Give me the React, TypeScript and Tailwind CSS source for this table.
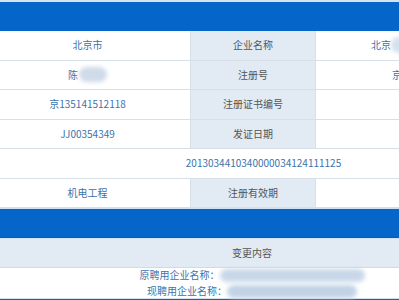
import React from "react";

const font = { fontFamily: '"Noto Sans CJK SC", "Liberation Sans", sans-serif' };

function Blur({ className }: { className: string }) {
  return <span className={"inline-block rounded-full blur-[2px] " + className} />;
}

function Row({
  left,
  label,
  right,
}: {
  left: React.ReactNode;
  label: string;
  right: React.ReactNode;
}) {
  return (
    <div className="grid grid-cols-[205px_126px_226px] h-[29.5px] border-b border-[#d7e0e9]">
      <div className="flex items-center justify-center text-[#3c72ab]">{left}</div>
      <div className="flex items-center justify-center bg-[#e2ebf4] border-l border-r border-[#d7e0e9] text-[#555]">
        {label}
      </div>
      <div className="flex items-center justify-center text-[#3c72ab]">{right}</div>
    </div>
  );
}

export default function App() {
  return (
    <div className="w-[399px] h-[300px] overflow-hidden bg-white text-[10px] leading-none" style={font}>
      <div className="-ml-[15px] w-[557px]">
        <div className="h-[31px] border-t-2 border-[#d6e2ee] bg-[#0565c8]" />

        <Row
          left="北京市"
          label="企业名称"
          right={
            <span className="flex items-center pl-[55px] w-full">
              北京
              <Blur className="w-[110px] h-[16px] bg-[#d3e0ee]" />
            </span>
          }
        />
        <Row
          left={
            <span className="flex items-center">
              陈
              <Blur className="ml-[1px] w-[28px] h-[15px] bg-[#cfdbe8]" />
            </span>
          }
          label="注册号"
          right={<span className="pl-[76px] w-full">京</span>}
        />
        <Row left="京135141512118" label="注册证书编号" right="" />
        <Row left="JJ00354349" label="发证日期" right="" />
        <div className="h-[29.5px] border-b border-[#d7e0e9] flex items-center justify-center text-[#3c72ab]">
          2013034410340000034124111125
        </div>
        <Row left="机电工程" label="注册有效期" right="" />

        <div className="h-[30px] border-t border-[#cfe0f0] bg-[#0565c8] border-b border-b-[#0a5cb0]" />
        <div className="h-[30px] bg-[#e2ebf4] border-t border-[#d3e2f0] border-b border-b-[#d2dbe4] flex items-center justify-center pr-[23px] text-[#555]">
          变更内容
        </div>
        <div className="h-[30px] flex flex-col items-center justify-center gap-[3px] pr-[23px] text-[#3c72ab]">
          <div className="flex items-center">
            原聘用企业名称：
            <Blur className="w-[145px] h-[13px] bg-[#c9d8e8]" />
          </div>
          <div className="flex items-center">
            现聘用企业名称：
            <Blur className="w-[130px] h-[13px] bg-[#c2d3e6]" />
          </div>
        </div>
        <div className="h-[10px] border-t border-[#cfe0f0] bg-[#0565c8]" />
      </div>
    </div>
  );
}
